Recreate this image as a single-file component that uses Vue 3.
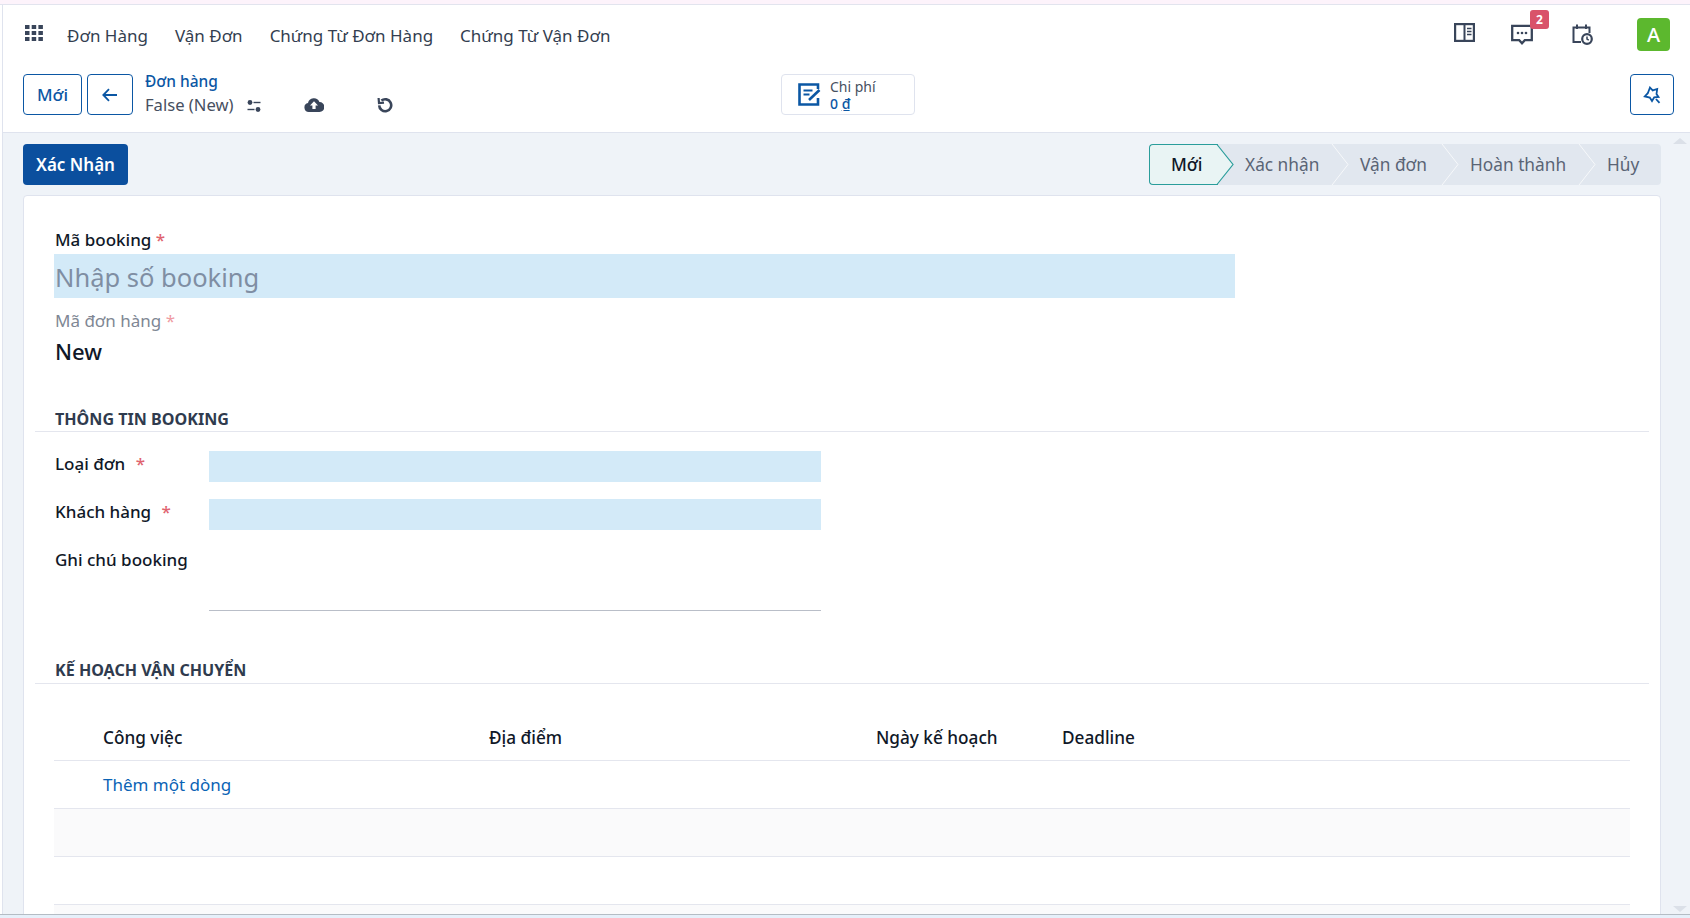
<script setup>
const menus = ['Đơn Hàng', 'Vận Đơn', 'Chứng Từ Đơn Hàng', 'Chứng Từ Vận Đơn']
const steps = [
  { label: 'Xác nhận', width: 115 },
  { label: 'Vận đơn', width: 110 },
  { label: 'Hoàn thành', width: 137 },
  { label: 'Hủy', width: 81 }
]
const columns = ['Công việc', 'Địa điểm', 'Ngày kế hoạch', 'Deadline']
</script>

<template>
  <div class="window">
    <div class="top-strip"></div>
    <div class="page">
      <nav class="navbar">
        <svg class="apps" viewBox="0 0 18 16" width="18" height="16" fill="#39455a">
          <rect x="0" y="0" width="4.5" height="4" /><rect x="6.7" y="0" width="4.5" height="4" /><rect x="13.4" y="0" width="4.5" height="4" />
          <rect x="0" y="6" width="4.5" height="4" /><rect x="6.7" y="6" width="4.5" height="4" /><rect x="13.4" y="6" width="4.5" height="4" />
          <rect x="0" y="12" width="4.5" height="4" /><rect x="6.7" y="12" width="4.5" height="4" /><rect x="13.4" y="12" width="4.5" height="4" />
        </svg>
        <a v-for="m in menus" :key="m" class="menu-item">{{ m }}</a>
        <div class="systray">
          <svg class="tray-book" viewBox="0 0 21 19" width="21" height="19" fill="none" stroke="#39455a" stroke-width="2.2">
            <rect x="1.1" y="1.1" width="18.8" height="16.8" />
            <path d="M10.5 1v17" stroke-width="2" />
            <path d="M13 5.5h4.5M13 8.5h4.5M13 11.5h4.5" stroke-width="1.4" />
          </svg>
          <div class="tray-chat">
            <svg viewBox="0 0 22 21" width="22" height="21" fill="none">
              <path d="M1.2 1.8h19.6v14.4h-7l-2.8 3-2.8-3h-7z" stroke="#39455a" stroke-width="2.3" />
              <circle cx="7" cy="9" r="1.3" fill="#39455a" /><circle cx="11" cy="9" r="1.3" fill="#39455a" /><circle cx="15" cy="9" r="1.3" fill="#39455a" />
            </svg>
            <span class="badge">2</span>
          </div>
          <svg class="tray-cal" viewBox="0 0 21 21" width="21" height="21" fill="none" stroke="#39455a" stroke-width="2">
            <path d="M9 18H1.5V3.5h16V9" />
            <path d="M5 0.5v4.5M14 0.5v4.5" />
            <circle cx="15" cy="15" r="4.8" stroke-width="2.2" />
            <path d="M15 12.5V15l1.8 1.2" stroke-width="1.5" />
          </svg>
          <div class="avatar">A</div>
        </div>
      </nav>

      <div class="control-panel">
        <div class="cp-left">
          <button class="btn-outline btn-new">Mới</button>
          <button class="btn-outline btn-back">
            <svg viewBox="0 0 16 14" width="16" height="14" fill="none" stroke="#0b57a4" stroke-width="1.8">
              <path d="M15 7H1.5M7 1.2 1.3 7 7 12.8" />
            </svg>
          </button>
          <div class="crumbs">
            <a class="crumb-link">Đơn hàng</a>
            <div class="crumb-row">
              <span class="crumb-current">False (New)</span>
              <svg class="ic-sliders" viewBox="0 0 14 12" width="14" height="12" fill="#39455a">
                <circle cx="3" cy="2.5" r="2.4" /><rect x="6.5" y="1.8" width="7" height="1.4" />
                <circle cx="11" cy="9.5" r="2.4" /><rect x="0.5" y="8.8" width="7" height="1.4" />
              </svg>
              <svg class="ic-cloud" viewBox="0 0 20 15" width="20" height="15">
                <path fill="#39455a" d="M5 15a4.5 4.5 0 0 1-1-8.9A6 6 0 0 1 15.4 5 5 5 0 0 1 15.5 15z" />
                <path fill="#fff" d="M10 4.2 14 8.4h-2.4V12H8.4V8.4H6z" />
              </svg>
              <svg class="ic-undo" viewBox="0 0 16 16" width="16" height="16" fill="none" stroke="#39455a" stroke-width="2.6">
                <path d="M4.4 3.6A6 6 0 1 1 2.2 8.4" />
                <path d="M1.6 1 2 6l5-.4" stroke-width="2.2" />
              </svg>
            </div>
          </div>
        </div>
        <div class="stat-btn">
          <svg viewBox="0 0 23 23" width="23" height="23" fill="none" stroke="#0b57a4">
            <path d="M20 6V1.5H1.5v20H20V15" stroke-width="2.6" />
            <path d="M5.5 7.5h9M5.5 11.5h6" stroke-width="2.2" />
            <path d="M11 17 21.5 7" stroke-width="2.6" />
          </svg>
          <div class="stat-text">
            <span class="stat-label">Chi phí</span>
            <span class="stat-value">0 <u>₫</u></span>
          </div>
        </div>
        <button class="btn-outline btn-star">
          <svg viewBox="0 0 18 18" width="18" height="18" fill="none" stroke="#0b57a4" stroke-width="1.8" stroke-linejoin="miter">
            <path d="M7 1.5 9.7 4.4 14.2 3 13.5 8 15.5 11 11.2 11.4 9 15 6.8 11.6 1.8 10.5 4.8 7.2z" />
            <path d="M13 13 16.5 16.8" />
          </svg>
        </button>
      </div>

      <main class="content">
        <div class="actions">
          <button class="btn-primary">Xác Nhận</button>
          <div class="statusbar">
            <div class="step step-active">
              Mới
              <svg class="step-tip" viewBox="0 0 17 41" preserveAspectRatio="none">
                <path d="M0 0.5 16 20.5 0 40.5" fill="#e9f4f4" stroke="#2a9d9b" stroke-width="1.2" />
              </svg>
            </div>
            <div v-for="s in steps" :key="s.label" class="step" :style="{ width: s.width + 'px' }">
              {{ s.label }}
              <svg v-if="s.label !== 'Hủy'" class="step-tip" viewBox="0 0 17 41" preserveAspectRatio="none">
                <path d="M0 0 16 20.5 0 41" fill="#e1e7ef" stroke="#f7f9fb" stroke-width="1" />
              </svg>
            </div>
          </div>
        </div>

        <div class="sheet">
          <div class="title-block">
            <label class="lbl">Mã booking <span class="req">*</span></label>
            <div class="title-input">Nhập số booking</div>
            <label class="lbl lbl-muted">Mã đơn hàng <span class="req">*</span></label>
            <div class="order-code">New</div>
          </div>

          <h2 class="section-title first">THÔNG TIN BOOKING</h2>
          <div class="fields">
            <div class="field">
              <label class="lbl">Loại đơn <span class="req req-gap">*</span></label>
              <div class="input-req"></div>
            </div>
            <div class="field">
              <label class="lbl">Khách hàng <span class="req req-gap">*</span></label>
              <div class="input-req"></div>
            </div>
            <div class="field field-note">
              <label class="lbl">Ghi chú booking</label>
              <div class="input-note"></div>
            </div>
          </div>

          <h2 class="section-title second">KẾ HOẠCH VẬN CHUYỂN</h2>
          <div class="table">
            <div class="tr thead">
              <span v-for="c in columns" :key="c">{{ c }}</span>
            </div>
            <div class="tr"><a class="add-line">Thêm một dòng</a></div>
            <div class="tr tr-alt"></div>
            <div class="tr"></div>
            <div class="tr tr-alt"></div>
          </div>
        </div>

        <div class="scrollbar">
          <span class="sb-up"></span>
          <span class="sb-down"></span>
        </div>
      </main>
    </div>
    <div class="bottom-strip"></div>
  </div>
</template>

<style>
html, body {
  margin: 0;
  height: 100%;
  overflow: hidden;
  background: #fff;
}
</style>

<style scoped>
.window {
  width: 1690px;
  height: 918px;
  display: flex;
  flex-direction: column;
  overflow: hidden;
  font-family: "Noto Sans", "Open Sans", sans-serif;
  color: #1b2433;
}

.top-strip {
  height: 4px;
  flex: none;
  background: #fdf3fb;
  border-bottom: 1px solid #e2e4ee;
}

.page {
  flex: 1;
  min-height: 0;
  display: flex;
  flex-direction: column;
  margin-left: 2px;
  border-left: 1px solid #dfe3ee;
  background: #fff;
}

.bottom-strip {
  height: 3px;
  flex: none;
  background: #e6f0fa;
  border-top: 1px solid #b4bcc4;
}

.navbar {
  height: 61px;
  flex: none;
  display: flex;
  align-items: center;
  padding-left: 22px;
  box-sizing: border-box;
}

.apps {
  margin-right: 24px;
  margin-top: -6px;
}

.menu-item {
  font-size: 17px;
  color: #333e50;
  margin-right: 27px;
  margin-top: -1px;
}

.systray {
  margin-left: auto;
  display: flex;
  align-items: center;
  padding-right: 20px;
  margin-top: -3px;
}

.tray-book {
  margin-right: 36px;
  margin-top: -4px;
}

.tray-chat {
  position: relative;
  width: 22px;
  height: 21px;
  margin-right: 39px;
}

.badge {
  position: absolute;
  left: 19px;
  top: -14px;
  width: 19px;
  height: 19px;
  border-radius: 3px;
  background: #d9536a;
  color: #fff;
  font-size: 12px;
  font-weight: 700;
  line-height: 19px;
  text-align: center;
}

.tray-cal {
  margin-right: 44px;
}

.avatar {
  width: 33px;
  height: 33px;
  border-radius: 4px;
  background: #5cb82e;
  color: #fff;
  font-size: 20px;
  font-weight: 500;
  line-height: 33px;
  text-align: center;
}

.control-panel {
  height: 67px;
  flex: none;
  display: flex;
  align-items: flex-start;
  padding: 8px 16px 0 20px;
  box-sizing: border-box;
  border-bottom: 1px solid #dfe3ee;
}

.cp-left {
  width: 758px;
  flex: none;
  display: flex;
  align-items: flex-start;
}

.btn-outline {
  height: 41px;
  box-sizing: border-box;
  background: #fff;
  border: 1px solid #0b57a4;
  border-radius: 4px;
  color: #0b57a4;
  font-family: inherit;
  font-size: 17px;
  font-weight: 500;
  padding: 0;
  display: flex;
  align-items: center;
  justify-content: center;
}

.btn-new {
  width: 59px;
}

.btn-back {
  width: 46px;
  margin-left: 5px;
}

.crumbs {
  margin-left: 12px;
}

.crumb-link {
  display: block;
  font-size: 15.5px;
  font-weight: 500;
  color: #0b57a4;
  line-height: 22px;
  margin-top: -4px;
}

.crumb-row {
  display: flex;
  align-items: center;
  height: 26px;
}

.crumb-current {
  font-size: 16.6px;
  color: #47505f;
  margin-top: -2px;
}

.ic-sliders {
  margin-left: 14px;
  margin-top: 2px;
}

.ic-cloud {
  margin-left: 43px;
  margin-top: -1px;
}

.ic-undo {
  margin-left: 53px;
  margin-top: -1px;
}

.stat-btn {
  width: 134px;
  height: 41px;
  box-sizing: border-box;
  border: 1px solid #dfe3ee;
  border-radius: 4px;
  display: flex;
  align-items: center;
  padding-left: 16px;
  gap: 9px;
}

.stat-text {
  display: flex;
  flex-direction: column;
  font-size: 14px;
  line-height: 17px;
  padding-top: 1px;
}

.stat-label {
  color: #47505f;
}

.stat-value {
  color: #0b57a4;
  font-weight: 500;
}

.btn-star {
  width: 44px;
  margin-left: auto;
}

.content {
  position: relative;
  flex: 1;
  min-height: 0;
  background: #eff3f8;
  padding: 11px 29px 0 20px;
  overflow: hidden;
}

.actions {
  height: 41px;
  display: flex;
  justify-content: space-between;
}

.btn-primary {
  width: 105px;
  height: 41px;
  border: none;
  border-radius: 4px;
  background: #0b4f9e;
  color: #fff;
  font-family: inherit;
  font-size: 17px;
  font-weight: 600;
  padding: 0;
}

.statusbar {
  width: 512px;
  display: flex;
  background: #e1e7ef;
  border-radius: 4px;
}

.step {
  position: relative;
  box-sizing: border-box;
  flex: none;
  height: 41px;
  line-height: 41px;
  padding-left: 27px;
  font-size: 17.3px;
  color: #5a6475;
  white-space: nowrap;
}

.step-active {
  width: 69px;
  padding-left: 21px;
  background: #e9f4f4;
  border: 1px solid #2a9d9b;
  border-right: none;
  border-radius: 4px 0 0 4px;
  line-height: 39px;
  color: #101828;
  font-weight: 500;
}

.step-tip {
  position: absolute;
  top: 0;
  right: -16px;
  width: 17px;
  height: 41px;
  z-index: 1;
  overflow: visible;
}

.step-active .step-tip {
  top: -1px;
}

.sheet {
  margin-top: 10px;
  height: 760px;
  box-sizing: border-box;
  background: #fff;
  border: 1px solid #dfe3ee;
  border-radius: 4px 4px 0 0;
  padding: 31px 11px 0;
}

.title-block {
  padding-left: 20px;
}

.lbl {
  display: block;
  font-size: 17px;
  font-weight: 500;
  line-height: 26px;
  color: #101828;
  white-space: nowrap;
}

.lbl-muted {
  font-weight: 400;
  color: #808794;
  margin-top: 10px;
}

.req {
  color: #e0636f;
}

.lbl-muted .req {
  color: #ef9ba3;
}

.req-gap {
  margin-left: 6px;
}

.title-input {
  width: 1181px;
  height: 44px;
  margin: 1px 0 0 -1px;
  background: #d3eaf8;
  font-size: 25.5px;
  line-height: 46px;
  color: #7f8ea3;
  padding-left: 1px;
  box-sizing: border-box;
}

.order-code {
  font-size: 22px;
  font-weight: 500;
  line-height: 34px;
  color: #101828;
}

.section-title {
  margin: 0;
  height: 26px;
  padding-left: 20px;
  font-size: 16.1px;
  font-weight: 700;
  line-height: 26px;
  color: #2f3b4e;
  border-bottom: 1px solid #e4e6ee;
}

.section-title.first {
  margin-top: 37px;
  line-height: 28px;
}

.section-title.second {
  margin-top: 46px;
}

.fields {
  padding: 19px 0 0 20px;
}

.field {
  display: flex;
  height: 48px;
}

.field .lbl {
  width: 154px;
  flex: none;
}

.input-req {
  width: 612px;
  height: 31px;
  background: #d3eaf8;
}

.field-note {
  height: 64px;
}

.input-note {
  width: 612px;
  height: 64px;
  border-bottom: 1px solid #b9bec8;
  box-sizing: border-box;
}

.table {
  margin: 30px 0 0 19px;
  width: 1576px;
  font-size: 17px;
}

.tr {
  height: 48px;
  box-sizing: border-box;
  padding-left: 49px;
  border-bottom: 1px solid #e4e6ee;
  line-height: 47px;
}

.thead {
  display: grid;
  grid-template-columns: 386px 387px 186px 1fr;
  font-size: 17.2px;
  font-weight: 500;
  color: #101828;
  height: 47px;
  line-height: 47px;
}

.tr-alt {
  background: #fafafb;
}

.add-line {
  color: #0b63b5;
}

.scrollbar {
  position: absolute;
  top: 0;
  right: 0;
  bottom: 0;
  width: 19px;
}

.sb-up,
.sb-down {
  position: absolute;
  right: 3px;
  width: 0;
  height: 0;
  border-left: 7px solid transparent;
  border-right: 7px solid transparent;
}

.sb-up {
  top: 5px;
  border-bottom: 6px solid #dbe0e8;
}

.sb-down {
  bottom: 2px;
  border-top: 6px solid #dbe0e8;
}
</style>
